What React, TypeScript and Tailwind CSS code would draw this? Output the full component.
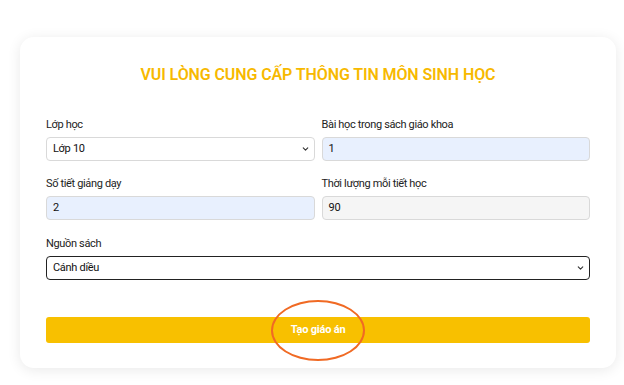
import { ChevronDown } from 'lucide-react';

const Label = ({ children }: { children: React.ReactNode }) => (
  <label className="block text-[11px] leading-4 tracking-[-0.35px] text-[#222] mb-1">{children}</label>
);

const SelectBox = ({ value, focused }: { value: string; focused?: boolean }) => (
  <div
    className={`relative h-6 rounded-[4px] bg-white flex items-center px-[6px] text-[11px] tracking-[-0.3px] text-[#111] ${
      focused ? 'border-[1.5px] border-[#222]' : 'border border-[#d9d9d9]'
    }`}
  >
    <span>{value}</span>
    <ChevronDown size={9} strokeWidth={3} className="absolute right-[4px] top-1/2 -translate-y-1/2 text-[#333]" />
  </div>
);

const InputBox = ({ value, bg }: { value: string; bg: string }) => (
  <div className={`h-6 rounded-[4px] border border-[#d9d9d9] flex items-center px-[6px] text-[11px] tracking-[-0.3px] text-[#111] ${bg}`}>
    {value}
  </div>
);

export default function App() {
  return (
    <div className="w-[624px] h-[385px] bg-white pt-[37px] px-[20px] font-['Roboto',sans-serif]">
      <div className="w-[596px] h-[331px] bg-white rounded-[14px] shadow-[0_2px_14px_rgba(0,0,0,0.09)] px-[26px] pt-[26px]">
        {/* Title */}
        <h1 className="text-center text-[16px] leading-6 font-semibold text-[#f7b900] tracking-[-0.1px]">
          VUI LÒNG CUNG CẤP THÔNG TIN MÔN SINH HỌC
        </h1>

        {/* Form grid */}
        <div className="mt-[30px] grid grid-cols-2 gap-x-[7px]">
          <div>
            <Label>Lớp học</Label>
            <SelectBox value="Lớp 10" />
          </div>
          <div>
            <Label>Bài học trong sách giáo khoa</Label>
            <InputBox value="1" bg="bg-[#e8f0fe]" />
          </div>
        </div>

        <div className="mt-[15px] grid grid-cols-2 gap-x-[7px]">
          <div>
            <Label>Số tiết giảng dạy</Label>
            <InputBox value="2" bg="bg-[#e8f0fe]" />
          </div>
          <div>
            <Label>Thời lượng mỗi tiết học</Label>
            <InputBox value="90" bg="bg-[#f5f5f5]" />
          </div>
        </div>

        <div className="mt-[16px]">
          <Label>Nguồn sách</Label>
          <SelectBox value="Cánh diều" focused />
        </div>

        {/* Submit */}
        <div className="relative mt-[36px]">
          <button className="w-full h-[26px] rounded-[3px] bg-[#f8c000] text-white text-[11px] font-bold tracking-[-0.2px]">
            Tạo giáo án
          </button>
          <div className="absolute left-[225px] top-[-16px] w-[94px] h-[61px] rounded-[50%] border-2 border-[#f06a24] pointer-events-none" />
        </div>
      </div>
    </div>
  );
}
